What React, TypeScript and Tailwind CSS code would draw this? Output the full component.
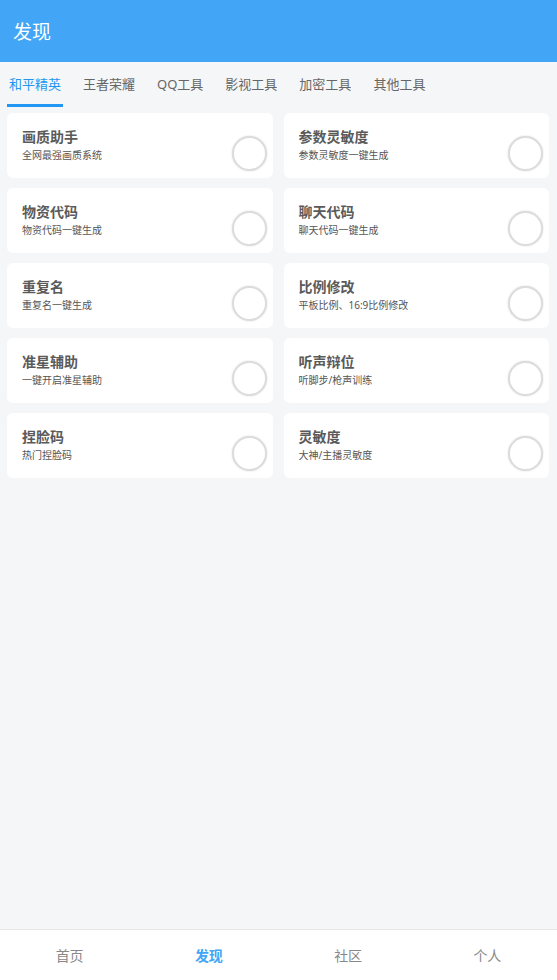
import React from "react";

const tabs = ["和平精英", "王者荣耀", "QQ工具", "影视工具", "加密工具", "其他工具"];

const tools = [
  { title: "画质助手", desc: "全网最强画质系统" },
  { title: "参数灵敏度", desc: "参数灵敏度一键生成" },
  { title: "物资代码", desc: "物资代码一键生成" },
  { title: "聊天代码", desc: "聊天代码一键生成" },
  { title: "重复名", desc: "重复名一键生成" },
  { title: "比例修改", desc: "平板比例、16:9比例修改" },
  { title: "准星辅助", desc: "一键开启准星辅助" },
  { title: "听声辩位", desc: "听脚步/枪声训练" },
  { title: "捏脸码", desc: "热门捏脸码" },
  { title: "灵敏度", desc: "大神/主播灵敏度" },
];

const navs = ["首页", "发现", "社区", "个人"];

const ToolCard = ({ title, desc }: { title: string; desc: string }) => (
  <div className="h-[65px] bg-white rounded-md flex items-start justify-between pl-[15px] pr-[6px]">
    <div className="pt-[15px]">
      <div className="text-[14px] leading-[18px] font-bold text-[#5a5a5a]">{title}</div>
      <div className="text-[10px] leading-[14px] mt-[2px] text-[#555]">{desc}</div>
    </div>
    <div className="mt-[23px] w-[35px] h-[35px] rounded-full bg-white border-2 border-[#dcdcdc] shadow-[0_0_2px_rgba(0,0,0,0.15)]" />
  </div>
);

export default function App() {
  return (
    <div
      className="w-[557px] h-[980px] flex flex-col bg-[#f5f6f8]"
      style={{ fontFamily: '"Noto Sans", "Noto Sans CJK SC", sans-serif' }}
    >
      <header className="h-[62px] bg-[#42a5f5] flex items-center pl-[13px] shrink-0">
        <span className="text-white text-[19px] pt-[2px]">发现</span>
      </header>

      <nav className="h-[45px] flex items-stretch pl-[7px] gap-[18px] shrink-0">
        {tabs.map((t, i) => (
          <div
            key={t}
            className={`px-[2px] flex items-center text-[13px] border-b-[3px] ${
              i === 0 ? "text-[#2196f3] border-[#2196f3]" : "text-[#666] border-transparent"
            }`}
          >
            <span className="pt-[3px]">{t}</span>
          </div>
        ))}
      </nav>

      <main className="flex-1 grid grid-cols-2 gap-x-[11px] gap-y-[10px] content-start pl-[7px] pr-[8px] pt-[6px]">
        {tools.map((t) => (
          <ToolCard key={t.title} {...t} />
        ))}
      </main>

      <footer className="h-[51px] bg-white border-t border-[#e6e6e6] grid grid-cols-4 shrink-0">
        {navs.map((n, i) => (
          <div
            key={n}
            className={`flex items-center justify-center text-[14px] ${
              i === 1 ? "text-[#42a5f5] font-bold" : "text-[#888]"
            }`}
          >
            {n}
          </div>
        ))}
      </footer>
    </div>
  );
}
